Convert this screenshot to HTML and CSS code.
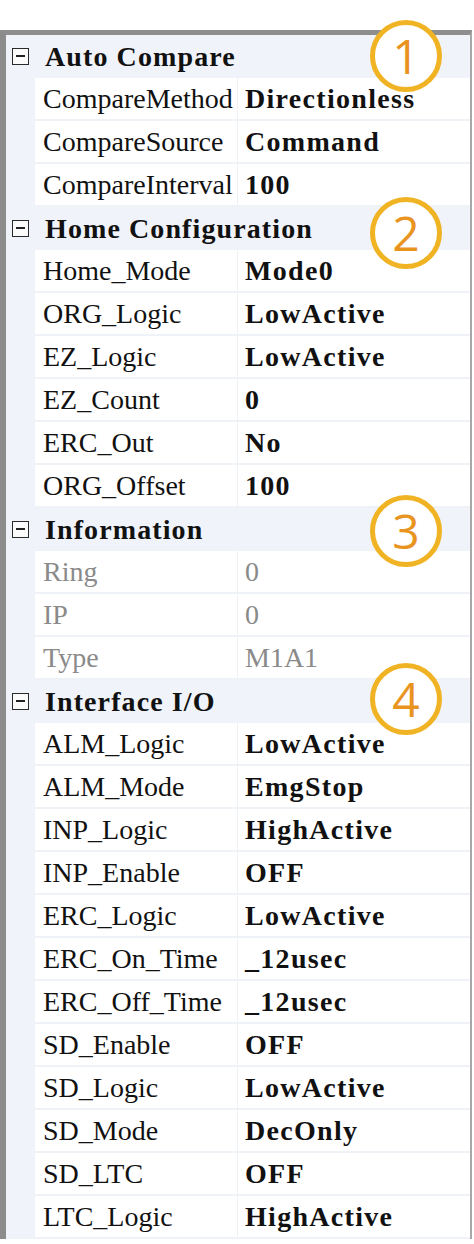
FILE: index.html
```html
<!DOCTYPE html>
<html>
<head>
<meta charset="utf-8">
<link rel="stylesheet" href="styles.css">
</head>
<body>
<div class="grid">
  <div class="cat"><span class="toggle"></span><span class="cat-title">Auto Compare</span></div>
  <div class="prop"><span class="gutter"></span><span class="name">CompareMethod</span><span class="value">Directionless</span></div>
  <div class="prop"><span class="gutter"></span><span class="name">CompareSource</span><span class="value">Command</span></div>
  <div class="prop"><span class="gutter"></span><span class="name">CompareInterval</span><span class="value">100</span></div>

  <div class="cat"><span class="toggle"></span><span class="cat-title">Home Configuration</span></div>
  <div class="prop"><span class="gutter"></span><span class="name">Home_Mode</span><span class="value">Mode0</span></div>
  <div class="prop"><span class="gutter"></span><span class="name">ORG_Logic</span><span class="value">LowActive</span></div>
  <div class="prop"><span class="gutter"></span><span class="name">EZ_Logic</span><span class="value">LowActive</span></div>
  <div class="prop"><span class="gutter"></span><span class="name">EZ_Count</span><span class="value">0</span></div>
  <div class="prop"><span class="gutter"></span><span class="name">ERC_Out</span><span class="value">No</span></div>
  <div class="prop"><span class="gutter"></span><span class="name">ORG_Offset</span><span class="value">100</span></div>

  <div class="cat"><span class="toggle"></span><span class="cat-title">Information</span></div>
  <div class="prop disabled"><span class="gutter"></span><span class="name">Ring</span><span class="value">0</span></div>
  <div class="prop disabled"><span class="gutter"></span><span class="name">IP</span><span class="value">0</span></div>
  <div class="prop disabled"><span class="gutter"></span><span class="name">Type</span><span class="value">M1A1</span></div>

  <div class="cat"><span class="toggle"></span><span class="cat-title">Interface I/O</span></div>
  <div class="prop"><span class="gutter"></span><span class="name">ALM_Logic</span><span class="value">LowActive</span></div>
  <div class="prop"><span class="gutter"></span><span class="name">ALM_Mode</span><span class="value">EmgStop</span></div>
  <div class="prop"><span class="gutter"></span><span class="name">INP_Logic</span><span class="value">HighActive</span></div>
  <div class="prop"><span class="gutter"></span><span class="name">INP_Enable</span><span class="value">OFF</span></div>
  <div class="prop"><span class="gutter"></span><span class="name">ERC_Logic</span><span class="value">LowActive</span></div>
  <div class="prop"><span class="gutter"></span><span class="name">ERC_On_Time</span><span class="value">_12usec</span></div>
  <div class="prop"><span class="gutter"></span><span class="name">ERC_Off_Time</span><span class="value">_12usec</span></div>
  <div class="prop"><span class="gutter"></span><span class="name">SD_Enable</span><span class="value">OFF</span></div>
  <div class="prop"><span class="gutter"></span><span class="name">SD_Logic</span><span class="value">LowActive</span></div>
  <div class="prop"><span class="gutter"></span><span class="name">SD_Mode</span><span class="value">DecOnly</span></div>
  <div class="prop"><span class="gutter"></span><span class="name">SD_LTC</span><span class="value">OFF</span></div>
  <div class="prop"><span class="gutter"></span><span class="name">LTC_Logic</span><span class="value">HighActive</span></div>

  <div class="marker m1">1</div>
  <div class="marker m2">2</div>
  <div class="marker m3">3</div>
  <div class="marker m4">4</div>
</div>
</body>
</html>
```

FILE: styles.css
```css
html, body {
  margin: 0;
  padding: 0;
  background: #ffffff;
}
body {
  width: 474px;
  height: 1244px;
  overflow: hidden;
  font-family: "Liberation Serif", "DejaVu Serif", serif;
}
.grid {
  position: relative;
  margin-top: 30px;
  width: 464px;
  border-top: 5px solid #8e8e8e;
  border-left: 6px solid #8c8c8c;
  border-right: 2px solid #a8a8a8;
  background: #f0f3f9;
  box-shadow: inset 1px 1px 0 #b8b8b8;
}
.cat {
  height: 43px;
  display: flex;
  align-items: center;
  background: #f0f3f9;
}
.toggle {
  position: relative;
  box-sizing: border-box;
  width: 17px;
  height: 17px;
  margin-left: 6px;
  border: 1.5px solid #2a2a2a;
  background: #fbfbfb;
}
.toggle::after {
  content: "";
  position: absolute;
  left: 3px;
  right: 3px;
  top: 6px;
  height: 2px;
  background: #222;
}
.cat-title {
  margin-left: 16px;
  font-family: "Liberation Serif", "DejaVu Serif", serif;
  font-size: 28px;
  font-weight: bold;
  letter-spacing: 1.1px;
  color: #111;
}
.prop {
  height: 43px;
  display: grid;
  grid-template-columns: 29px 203px 1fr;
}
.gutter {
  background: #f0f3f9;
}
.name, .value {
  display: flex;
  align-items: center;
  background: #ffffff;
  border-bottom: 2px solid #eff2f7;
  font-family: "Liberation Serif", "DejaVu Serif", serif;
  font-size: 28px;
  color: #111;
  white-space: nowrap;
  overflow: hidden;
}
.name {
  padding-left: 8px;
  border-right: 1px solid #eef1f5;
}
.value {
  padding-left: 7px;
  font-weight: bold;
  letter-spacing: 1.3px;
}
.prop.disabled .name,
.prop.disabled .value {
  color: #8a8a8a;
  font-weight: normal;
  letter-spacing: 0;
}
.marker {
  position: absolute;
  left: 364px;
  width: 62px;
  height: 62px;
  border: 5px solid #f0b323;
  border-radius: 50%;
  background: #ffffff;
  display: flex;
  align-items: center;
  justify-content: center;
  font-family: "Open Sans", "DejaVu Sans", sans-serif;
  font-weight: 400;
  font-size: 48px;
  line-height: 1;
  color: #e8941f;
}
.m1 { top: -15px; }
.m2 { top: 162px; }
.m3 { top: 460px; }
.m4 { top: 628px; }
```
